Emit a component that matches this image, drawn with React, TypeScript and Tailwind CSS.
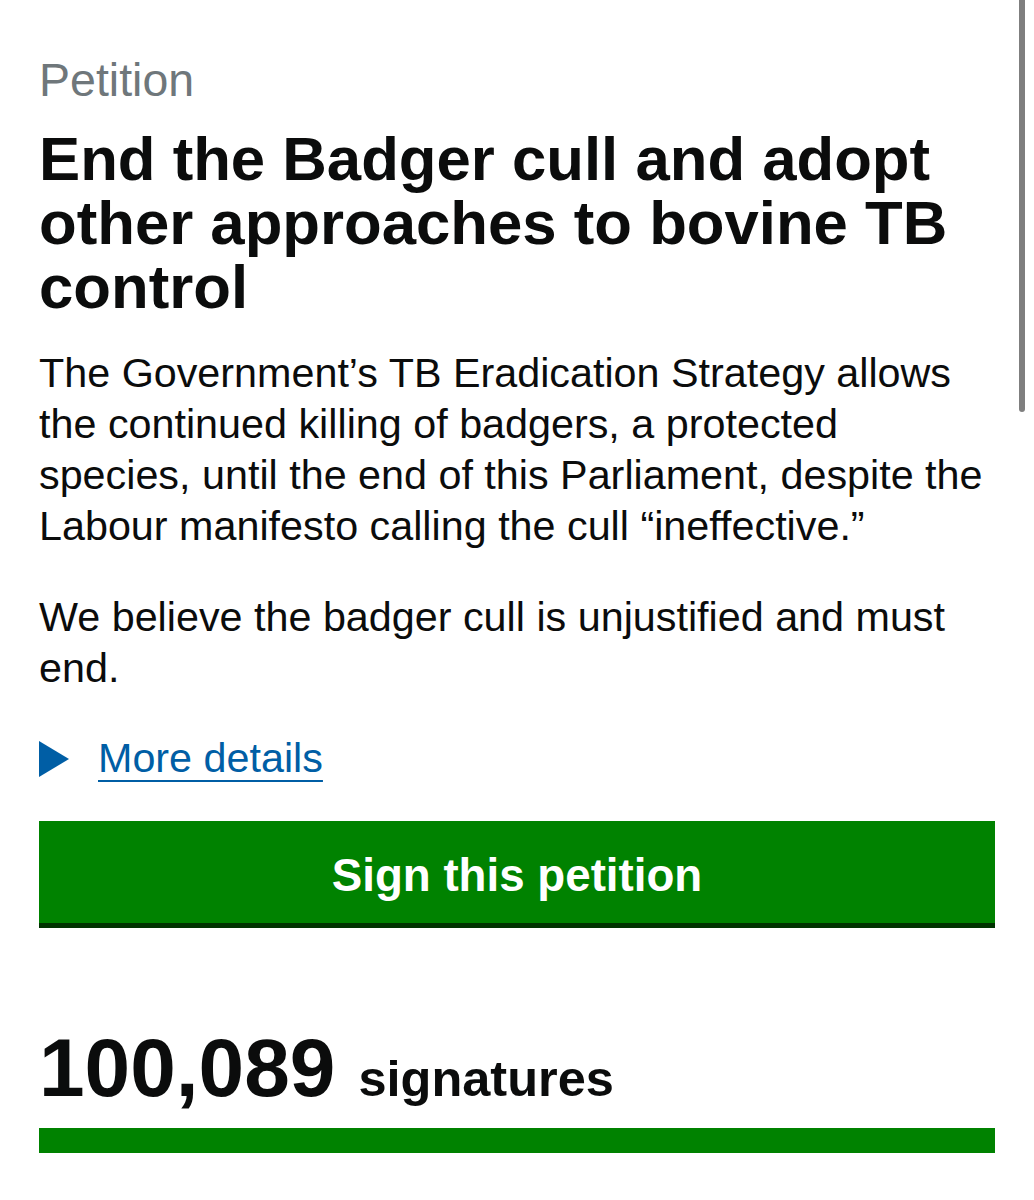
import React from "react";

export default function App() {
  return (
    <div
      className="relative w-full min-h-[1200px] overflow-hidden bg-white text-[#0b0c0c]"
      style={{ fontFamily: '"Liberation Sans", Arial, sans-serif' }}
    >
      <div className="px-[39px] pt-[54px]">
        <div className="text-[46.5px] leading-[52px] text-[#6f777b]">Petition</div>
        <h1 className="mt-[21px] text-[61.7px] leading-[64px] font-bold">
          End the Badger cull and adopt other approaches to bovine TB control
        </h1>
        <p className="mt-[29px] text-[41.3px] leading-[51px]">
          The Government’s TB Eradication Strategy allows the continued killing of badgers, a protected species, until the end of this Parliament, despite the Labour manifesto calling the cull “ineffective.”
        </p>
        <p className="mt-[40px] text-[41.3px] leading-[51px]">
          We believe the badger cull is unjustified and must end.
        </p>
        <div className="mt-[39px] flex items-center gap-[29px] text-[41.3px] leading-[51px] text-[#005ea5]">
          <svg width="30" height="36" viewBox="0 0 30 36" className="shrink-0">
            <polygon points="0,0 30,18 0,36" fill="#005ea5" />
          </svg>
          <span className="underline decoration-[2px] underline-offset-[8px]">More details</span>
        </div>
        <button className="mt-[37px] flex h-[107px] w-full items-center justify-center bg-[#008200] pt-[4px] text-[45.7px] font-bold text-white shadow-[inset_0_-5px_0_#003300]">
          Sign this petition
        </button>
        <div className="mt-[100px] flex items-baseline">
          <span className="text-[82px] leading-[80px] font-bold">100,089</span>
          <span className="ml-[23px] text-[50.5px] leading-[80px] font-bold">signatures</span>
        </div>
        <div className="mt-[9px] h-[25px] w-full bg-[#008200]" />
      </div>
      <div className="absolute right-[9px] top-0 h-[412px] w-[6px] rounded-b-full bg-[#7f7f7f]" />
    </div>
  );
}
